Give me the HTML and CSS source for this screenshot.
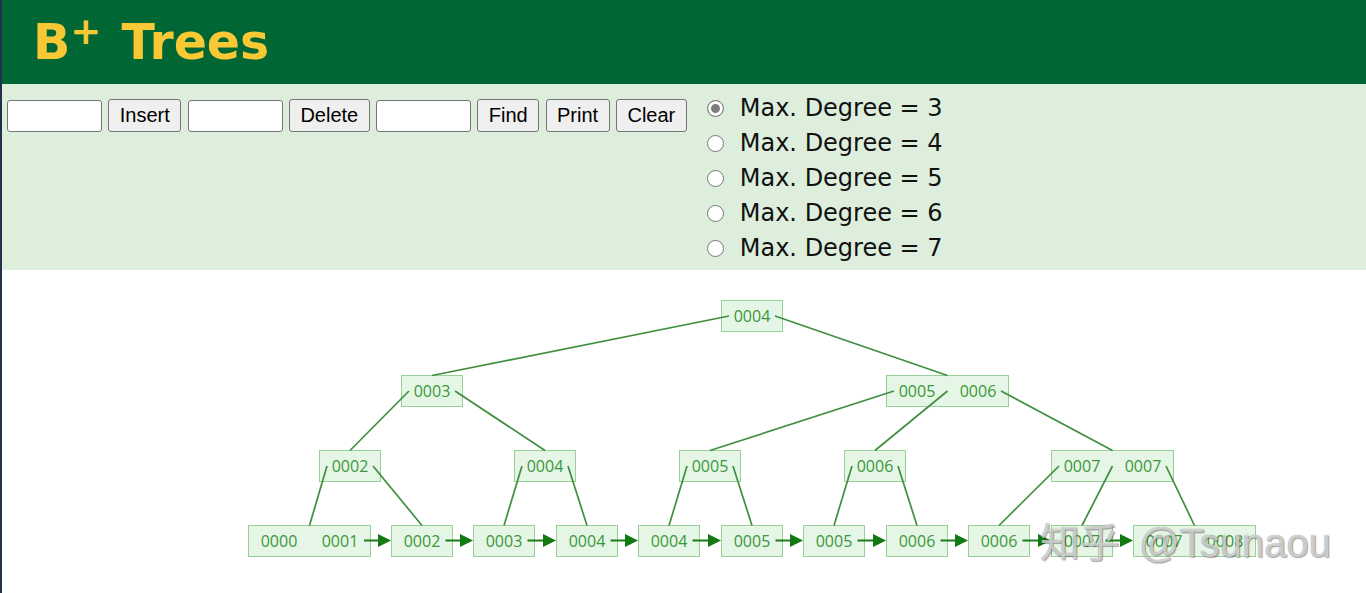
FILE: index.html
```html
<!DOCTYPE html>
<html lang="en">
<head>
<meta charset="utf-8">
<title>B+ Trees</title>
<link rel="stylesheet" href="styles.css">
</head>
<body>
<header class="header">
  <h1 class="title">B<sup class="plus">+</sup> Trees</h1>
</header>
<section class="controls">
  <div class="ops">
    <input class="field" type="text">
    <button class="btn">Insert</button>
    <input class="field" type="text">
    <button class="btn">Delete</button>
    <input class="field" type="text">
    <button class="btn">Find</button>
    <button class="btn">Print</button>
    <button class="btn">Clear</button>
  </div>
  <div class="degrees">
    <label class="degree"><input type="radio" name="deg" checked><span>Max. Degree = 3</span></label>
    <label class="degree"><input type="radio" name="deg"><span>Max. Degree = 4</span></label>
    <label class="degree"><input type="radio" name="deg"><span>Max. Degree = 5</span></label>
    <label class="degree"><input type="radio" name="deg"><span>Max. Degree = 6</span></label>
    <label class="degree"><input type="radio" name="deg"><span>Max. Degree = 7</span></label>
  </div>
</section>
<main class="tree">
  <svg class="canvas" width="1364" height="323" viewBox="2 270 1364 323" xmlns="http://www.w3.org/2000/svg">
    <g class="boxes">
      <rect x="721.5" y="300.5" width="61" height="31"/>
      <rect x="401.5" y="375.5" width="61" height="31"/>
      <rect x="886.5" y="375.5" width="122" height="31"/>
      <rect x="319.5" y="450.5" width="61" height="31"/>
      <rect x="514.5" y="450.5" width="61" height="31"/>
      <rect x="679.5" y="450.5" width="61" height="31"/>
      <rect x="844.5" y="450.5" width="61" height="31"/>
      <rect x="1051.5" y="450.5" width="122" height="31"/>
      <rect x="248.5" y="525.5" width="122" height="31"/>
      <rect x="391.5" y="525.5" width="61" height="31"/>
      <rect x="473.5" y="525.5" width="61" height="31"/>
      <rect x="556.5" y="525.5" width="61" height="31"/>
      <rect x="638.5" y="525.5" width="61" height="31"/>
      <rect x="721.5" y="525.5" width="61" height="31"/>
      <rect x="803.5" y="525.5" width="61" height="31"/>
      <rect x="886.5" y="525.5" width="61" height="31"/>
      <rect x="968.5" y="525.5" width="61" height="31"/>
      <rect x="1051.5" y="525.5" width="61" height="31"/>
      <rect x="1133.5" y="525.5" width="122" height="31"/>
    </g>
    <g class="edges">
      <line x1="729" y1="316" x2="432" y2="375.5"/>
      <line x1="775" y1="316" x2="947.5" y2="375.5"/>
      <line x1="409" y1="391" x2="350" y2="450.5"/>
      <line x1="455" y1="391" x2="545" y2="450.5"/>
      <line x1="894" y1="391" x2="710" y2="450.5"/>
      <line x1="947.5" y1="391" x2="875" y2="450.5"/>
      <line x1="1001" y1="391" x2="1112.5" y2="450.5"/>
      <line x1="327" y1="466" x2="309.5" y2="525.5"/>
      <line x1="373" y1="466" x2="422" y2="525.5"/>
      <line x1="522" y1="466" x2="504" y2="525.5"/>
      <line x1="568" y1="466" x2="587" y2="525.5"/>
      <line x1="687" y1="466" x2="669" y2="525.5"/>
      <line x1="733" y1="466" x2="752" y2="525.5"/>
      <line x1="852" y1="466" x2="834" y2="525.5"/>
      <line x1="898" y1="466" x2="917" y2="525.5"/>
      <line x1="1059" y1="466" x2="999" y2="525.5"/>
      <line x1="1112.5" y1="466" x2="1082" y2="525.5"/>
      <line x1="1166" y1="466" x2="1194.5" y2="525.5"/>
    </g>
    <g class="links">
      <line x1="364" y1="540.5" x2="380" y2="540.5"/><polygon points="378,534 391,540.5 378,547"/>
      <line x1="445.5" y1="540.5" x2="462" y2="540.5"/><polygon points="460,534 473,540.5 460,547"/>
      <line x1="527.5" y1="540.5" x2="545" y2="540.5"/><polygon points="543,534 556,540.5 543,547"/>
      <line x1="610.5" y1="540.5" x2="627" y2="540.5"/><polygon points="625,534 638,540.5 625,547"/>
      <line x1="692.5" y1="540.5" x2="710" y2="540.5"/><polygon points="708,534 721,540.5 708,547"/>
      <line x1="775.5" y1="540.5" x2="792" y2="540.5"/><polygon points="790,534 803,540.5 790,547"/>
      <line x1="857.5" y1="540.5" x2="875" y2="540.5"/><polygon points="873,534 886,540.5 873,547"/>
      <line x1="940.5" y1="540.5" x2="957" y2="540.5"/><polygon points="955,534 968,540.5 955,547"/>
      <line x1="1022.5" y1="540.5" x2="1040" y2="540.5"/><polygon points="1038,534 1051,540.5 1038,547"/>
      <line x1="1105.5" y1="540.5" x2="1122" y2="540.5"/><polygon points="1120,534 1133,540.5 1120,547"/>
    </g>
    <g class="keys">
      <text x="752" y="322">0004</text>
      <text x="432" y="397">0003</text>
      <text x="917" y="397">0005</text>
      <text x="978" y="397">0006</text>
      <text x="350" y="472">0002</text>
      <text x="545" y="472">0004</text>
      <text x="710" y="472">0005</text>
      <text x="875" y="472">0006</text>
      <text x="1082" y="472">0007</text>
      <text x="1143" y="472">0007</text>
      <text x="279" y="547">0000</text>
      <text x="340" y="547">0001</text>
      <text x="422" y="547">0002</text>
      <text x="504" y="547">0003</text>
      <text x="587" y="547">0004</text>
      <text x="669" y="547">0004</text>
      <text x="752" y="547">0005</text>
      <text x="834" y="547">0005</text>
      <text x="917" y="547">0006</text>
      <text x="999" y="547">0006</text>
      <text x="1082" y="547">0007</text>
      <text x="1164" y="547">0007</text>
      <text x="1225" y="547">0008</text>
    </g>
  </svg>
  <div class="watermark"><span class="wm-cjk">知乎</span> @Tsunaou</div>
</main>
</body>
</html>
```

FILE: styles.css
```css
html, body {
  margin: 0;
  padding: 0;
}

body {
  background: #ffffff;
  border-left: 2px solid #22304a;
  font-family: "Liberation Sans", Arial, sans-serif;
  overflow: hidden;
}

.header {
  height: 84px;
  background: #006633;
  display: flex;
  align-items: center;
  padding-left: 31px;
}

.title {
  margin: 0;
  font-family: "DejaVu Sans", Verdana, sans-serif;
  font-weight: bold;
  font-size: 49px;
  line-height: 1;
  color: #f9c935;
}

.plus {
  font-size: 37px;
  line-height: 0;
  vertical-align: 15px;
  margin-right: 3px;
}

.controls {
  height: 186px;
  background: #ddeedd;
  display: flex;
  align-items: flex-start;
}

.ops {
  display: flex;
  align-items: flex-end;
  gap: 6.3px;
  margin: 15px 0 0 5px;
}

.field {
  box-sizing: border-box;
  width: 95px;
  height: 32px;
  margin: 0;
  padding: 0 4px;
  border: 1px solid #767676;
  border-radius: 3px;
  background: #ffffff;
  font: 20px "Liberation Sans", Arial, sans-serif;
}

.btn {
  box-sizing: border-box;
  height: 33px;
  margin: 0;
  padding: 0 10.5px;
  border: 1px solid #767676;
  border-radius: 3px;
  background: #efefef;
  color: #000000;
  font: 20px "Liberation Sans", Arial, sans-serif;
}

.degrees {
  margin: 6.5px 0 0 20px;
  display: flex;
  flex-direction: column;
}

.degree {
  height: 35px;
  display: flex;
  align-items: center;
  gap: 16px;
  font: 24px "DejaVu Sans", Verdana, sans-serif;
  color: #111111;
}

.degree input {
  appearance: none;
  -webkit-appearance: none;
  box-sizing: border-box;
  width: 17px;
  height: 17px;
  margin: 0;
  border: 1px solid #767676;
  border-radius: 50%;
  background: #ffffff;
}

.degree input:checked {
  border-color: #808080;
  background: #7c7c7c;
  box-shadow: inset 0 0 0 3px #ffffff;
}

.tree {
  position: relative;
  height: 323px;
  background: #ffffff;
}

.canvas {
  display: block;
}

.boxes rect {
  fill: #e6f6e6;
  stroke: #98d098;
  stroke-width: 1;
}

.edges line {
  stroke: #3f8f3f;
  stroke-width: 1.7;
}

.links line {
  stroke: #1b7d1b;
  stroke-width: 2;
}

.links polygon {
  fill: #137a13;
}

.keys text {
  font-family: "Open Sans", "Noto Sans", sans-serif;
  font-size: 16px;
  fill: #3a973a;
  text-anchor: middle;
}

.watermark {
  position: absolute;
  left: 1038px;
  top: 250px;
  font: 40px/40px "Liberation Sans", "Noto Sans CJK SC", sans-serif;
  color: rgba(255, 255, 255, 0.7);
  text-shadow: 0 0 1px rgba(0, 0, 0, 0.55), 1px 1px 1px rgba(0, 0, 0, 0.3);
  white-space: nowrap;
}

.wm-cjk {
  font-family: "Noto Sans CJK SC", sans-serif;
  margin-right: 8px;
}
```
